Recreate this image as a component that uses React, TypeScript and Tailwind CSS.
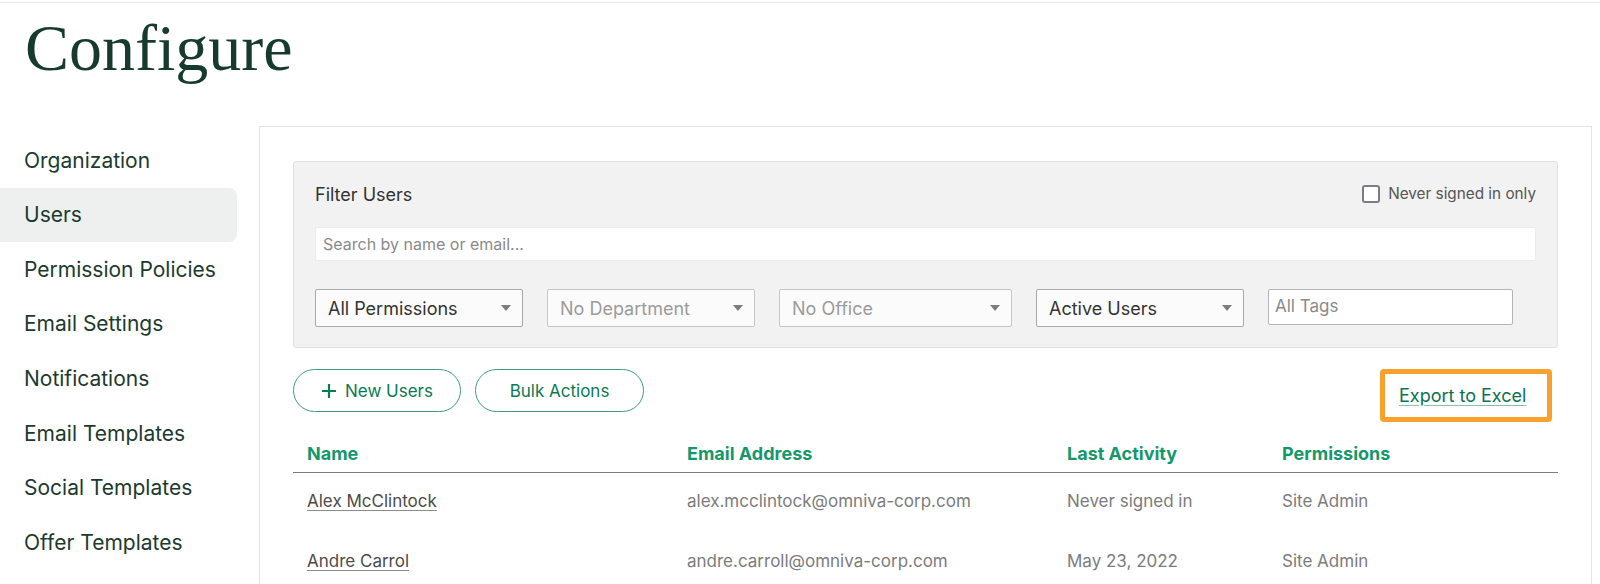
import React from "react";

const navItems = [
  "Organization",
  "Users",
  "Permission Policies",
  "Email Settings",
  "Notifications",
  "Email Templates",
  "Social Templates",
  "Offer Templates",
];

const rows = [
  {
    name: "Alex McClintock",
    email: "alex.mcclintock@omniva-corp.com",
    activity: "Never signed in",
    perm: "Site Admin",
  },
  {
    name: "Andre Carrol",
    email: "andre.carroll@omniva-corp.com",
    activity: "May 23, 2022",
    perm: "Site Admin",
  },
];

function Caret() {
  return (
    <svg width="10" height="6" viewBox="0 0 10 6" className="shrink-0">
      <path d="M0 0h10L5 6z" fill="#7d7d7d" />
    </svg>
  );
}

function Select({
  label,
  width,
  muted,
}: {
  label: string;
  width: string;
  muted?: boolean;
}) {
  return (
    <div
      className={`flex h-[38px] items-center justify-between rounded-[2px] border bg-[#fbfbfb] pl-[12px] pr-[11px] text-[18px] ${width} ${
        muted ? "border-[#c6c6c6] text-[#9b9b9b]" : "border-[#a9a9a9] text-[#333333]"
      }`}
    >
      <span className="pt-[1px]">{label}</span>
      <Caret />
    </div>
  );
}

export default function App() {
  return (
    <div className="h-[584px] w-[1600px] overflow-hidden bg-white font-['Inter',sans-serif]">
      <div className="mt-[2px] h-px bg-[#ebebeb]" />
      <h1 className="mt-[13px] h-[64px] pl-[25px] font-['Liberation_Serif',serif] text-[66px] leading-[64px] text-[#173a2e]">
        Configure
      </h1>
      <div className="mt-[46px] flex">
        <nav className="w-[259px] shrink-0 pt-[7px]">
          {navItems.map((item) => (
            <div
              key={item}
              className={`flex h-[54.6px] w-[237px] items-center pl-[24px] text-[21px] text-[#1c3a30] ${
                item === "Users" ? "rounded-r-[8px] bg-[#eef0ef]" : ""
              }`}
            >
              {item}
            </div>
          ))}
        </nav>
        <main className="mr-[8px] h-[600px] flex-1 border border-[#e4e4e4] px-[33px] pt-[34px]">
          <div className="rounded-[3px] border border-[#e1e1e1] bg-[#f2f2f2] px-[21px] pb-[20px] pt-[15px]">
            <div className="flex h-[34px] items-center justify-between">
              <span className="text-[18px] text-[#333333]">Filter Users</span>
              <label className="flex items-center gap-[8px]">
                <span className="h-[18px] w-[18px] rounded-[3px] border-2 border-[#7c7b86] bg-white" />
                <span className="text-[15.3px] text-[#555555]">Never signed in only</span>
              </label>
            </div>
            <div className="mt-[16px] flex h-[34px] items-center rounded-[2px] border border-[#ebebeb] bg-white px-[7px] text-[16px] text-[#8a8a8a]">
              Search by name or email...
            </div>
            <div className="mt-[28px] flex gap-[24px]">
              <Select label="All Permissions" width="w-[208px]" />
              <Select label="No Department" width="w-[208px]" muted />
              <Select label="No Office" width="w-[233px]" muted />
              <Select label="Active Users" width="w-[208px]" />
              <div className="flex h-[36px] w-[245px] items-start rounded-[2px] border border-[#b5b5b5] bg-white pl-[6px] pt-[4px] text-[17px] text-[#8a8a8a]">
                All Tags
              </div>
            </div>
          </div>

          <div className="mt-[21px] flex items-start justify-between">
            <div className="flex gap-[14px]">
              <button className="flex h-[43px] w-[168px] items-center justify-center gap-[8px] rounded-full border border-[#3f9d7e] pt-[3px] text-[17px] text-[#0b7a57]">
                <svg width="16" height="16" viewBox="0 0 16 16" className="-mt-[2px]">
                  <path d="M8 1v14M1 8h14" stroke="#0b7a57" strokeWidth="2.2" />
                </svg>
                New Users
              </button>
              <button className="flex h-[43px] w-[169px] items-center justify-center rounded-full border border-[#3f9d7e] pt-[3px] text-[17px] text-[#0b7a57]">
                Bulk Actions
              </button>
            </div>
            <div className="mr-[6px] flex h-[53px] w-[172px] items-center rounded-[4px] border-[5px] border-[#f8a12c] bg-white pl-[14px]">
              <span className="text-[18px] text-[#0b7352] underline decoration-[#8dbfae] underline-offset-[3px]">
                Export to Excel
              </span>
            </div>
          </div>

          <div className="mt-[11px] grid h-[40px] grid-cols-[380px_380px_215px_1fr] items-center border-b border-[#7d7d7d] pt-[1px] text-[18px] font-bold text-[#14986b]">
            <div className="pl-[14px]">Name</div>
            <div className="pl-[14px]">Email Address</div>
            <div className="pl-[14px]">Last Activity</div>
            <div className="pl-[14px]">Permissions</div>
          </div>

          {rows.map((r) => (
            <div
              key={r.name}
              className="grid h-[60px] grid-cols-[380px_380px_215px_1fr] items-start pt-[16px] text-[17px] leading-[25px] text-[#7c7c7c]"
            >
              <div className="pl-[14px]">
                <span className="text-[#4b4b4b] underline decoration-[#8c8c8c] underline-offset-[3px]">
                  {r.name}
                </span>
              </div>
              <div className="pl-[14px]">{r.email}</div>
              <div className="pl-[14px]">{r.activity}</div>
              <div className="pl-[14px]">{r.perm}</div>
            </div>
          ))}
        </main>
      </div>
    </div>
  );
}
